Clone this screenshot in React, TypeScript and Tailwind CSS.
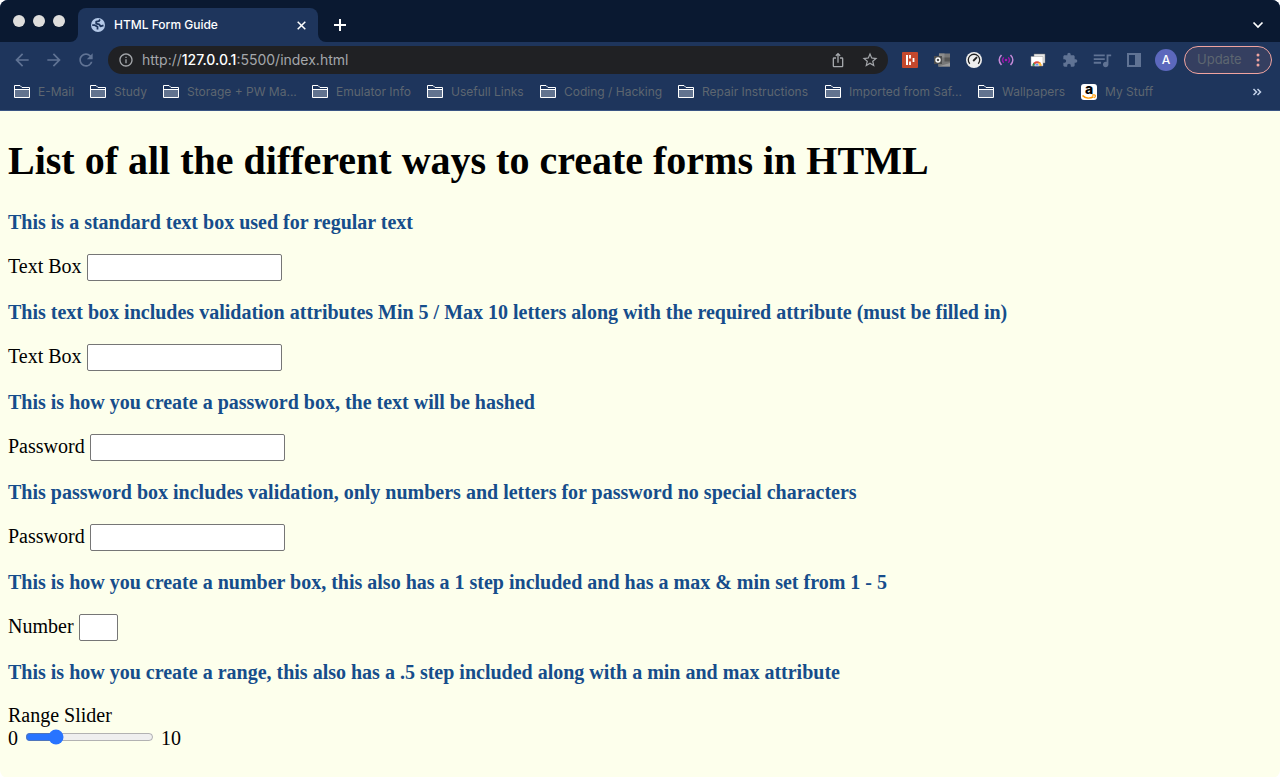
import React from "react";
import {
  MdArrowBack,
  MdArrowForward,
  MdRefresh,
  MdExtension,
  MdQueueMusic,
  MdInfoOutline,
  MdStarBorder,
  MdIosShare,
} from "react-icons/md";

const bookmarks = [
  { name: "E-Mail", width: "w-[76px]" },
  { name: "Study", width: "w-[73px]" },
  { name: "Storage + PW Ma...", width: "w-[149px]" },
  { name: "Emulator Info", width: "w-[115px]" },
  { name: "Usefull Links", width: "w-[113px]" },
  { name: "Coding / Hacking", width: "w-[138px]" },
  { name: "Repair Instructions", width: "w-[147px]" },
  { name: "Imported from Saf...", width: "w-[153px]" },
  { name: "Wallpapers", width: "w-[103px]" },
];

function Folder() {
  return (
    <svg width="16" height="14" viewBox="0 0 16 14" className="shrink-0">
      <path d="M.5 12.500v-12h5.500l2 2h7.500v10z" fill="#1e355c" stroke="#fff" />
      <path d="M1 5h14v7H1z" fill="#62738f" />
      <path d="M1 4.500h14" stroke="#fff" />
    </svg>
  );
}

function Globe() {
  return (
    <svg width="14" height="14" viewBox="0 0 14 14" className="shrink-0">
      <circle cx="7" cy="7" r="7" fill="#b4c9e8" />
      <g fill="none" stroke="#1e355c" strokeWidth="1.800" strokeLinejoin="round">
        <path d="M9 1.500L7.800 3.200 5.200 3.600v2l3 .7 1.300 2 3-.9" />
        <path d="M1.200 7.200h2.600l2.700 1.600v2.700" />
      </g>
    </svg>
  );
}

function Amazon() {
  return (
    <span className="relative flex h-4 w-4 shrink-0 justify-center rounded-[3px] bg-white">
      <span className="text-[14px] leading-[10px] font-extrabold text-black">a</span>
      <svg width="16" height="16" viewBox="0 0 16 16" fill="none" className="absolute inset-0">
        <path d="M1.500 11.500c3 3 7.500 3.200 11 1.200" stroke="#f90" strokeWidth="1.600" />
        <path d="M11 11.200c1.500-.4 2.800-.4 3.200 0s0 1.700-.8 2.700" stroke="#f90" strokeWidth="1.200" />
      </svg>
    </span>
  );
}

function Extensions() {
  return (
    <div className="flex items-center gap-4 pl-[14px]">
      <button aria-label="Recorder">
        <svg width="16" height="16" viewBox="0 0 16 16">
          <rect width="16" height="16" rx="1" fill="#c5482d" />
          <path d="M5 3v10" stroke="#fff" strokeWidth="2" />
          <path d="M8 3v3.500M8 9.500V13M11.500 6v4" stroke="#fff" strokeWidth="1.800" />
        </svg>
      </button>
      <button aria-label="Mail">
        <svg width="16" height="16" viewBox="0 0 16 16">
          <path d="M5 1.500h11v13H4z" fill="#777" />
          <path d="M5 1.500h5.500v4H5z" fill="#8d8d8d" />
          <path d="M10.500 5.500H16v4h-5.500z" fill="#555" />
          <path d="M4 14.500L16 11v3.500z" fill="#999" />
          <path d="M0 4h8v8H0z" fill="#4e4e4e" />
          <circle cx="4" cy="8" r="2" fill="none" stroke="#fff" strokeWidth="1.400" />
        </svg>
      </button>
      <button aria-label="Performance">
        <svg width="16" height="16" viewBox="0 0 16 16">
          <circle cx="8" cy="8" r="8" fill="#eee" />
          <path d="M3.800 11.800a5.700 5.700 0 1 1 8.400 0" fill="none" stroke="#222" strokeWidth="1.300" />
          <path d="M7.200 9L11 5.200" stroke="#222" strokeWidth="1.800" />
        </svg>
      </button>
      <button aria-label="Broadcast">
        <svg width="16" height="16" viewBox="0 0 16 16" fill="none">
          <path d="M3.500 3c-3 3-3 7 0 10M12.500 3c3 3 3 7 0 10" stroke="#c58ad8" strokeWidth="1.600" />
          <path d="M5.800 5.200c-1.600 1.700-1.600 3.900 0 5.600M10.200 5.200c1.600 1.700 1.600 3.900 0 5.600" stroke="#9419a8" strokeWidth="1.500" />
          <circle cx="8" cy="8" r="1.300" fill="#a61bb5" />
        </svg>
      </button>
      <button aria-label="Web store">
        <svg width="16" height="16" viewBox="0 0 16 16">
          <path d="M4 2h11v9H4z" fill="#e8e8e8" stroke="#777" strokeWidth=".5" />
          <path d="M1 4.500h12V14H1z" fill="#fff" stroke="#999" strokeWidth=".5" />
          <path d="M2.500 13.800a4.500 4.500 0 0 1 9 0z" fill="#dd4b3e" />
          <path d="M2.500 13.800a4.500 4.500 0 0 1 1-3l2 3z" fill="#169b55" />
          <path d="M11.500 13.800a4.500 4.500 0 0 0-1-3H8v3z" fill="#fbc02d" />
          <path d="M4.800 13.800a2.200 2.200 0 0 1 4.400 0z" fill="#4285f4" stroke="#fff" strokeWidth=".6" />
        </svg>
      </button>
      <button aria-label="Extensions" className="text-[#607394]"><MdExtension size={16} /></button>
      <button aria-label="Media" className="text-[#607394]"><MdQueueMusic size={22} className="-mx-[3px]" /></button>
      <button aria-label="Side panel">
        <svg width="16" height="16" viewBox="0 0 16 16">
          <path d="M2 2h12v12H2z" fill="none" stroke="#607394" strokeWidth="2" />
          <path d="M9 2h5v12H9z" fill="#607394" />
        </svg>
      </button>
    </div>
  );
}

function Browser() {
  return (
    <header className="rounded-t-lg border-b border-[#3a5583] bg-[#1e355c] font-['Inter',sans-serif]">
      <div className="flex h-[42px] items-end rounded-t-lg bg-[#0a1931]">
        <div className="flex gap-2 self-center pl-[13px]">
          <span className="h-3 w-3 rounded-full bg-[#dedddc]" />
          <span className="h-3 w-3 rounded-full bg-[#dedddc]" />
          <span className="h-3 w-3 rounded-full bg-[#dedddc]" />
        </div>
        <div className="ml-[5px] flex items-end">
          <span className="h-2 w-2 bg-[#1e355c]"><span className="block h-2 w-2 rounded-br-lg bg-[#0a1931]" /></span>
          <div className="flex h-[34px] w-[240px] items-center rounded-t-lg bg-[#1e355c] pr-3 pl-[13px] text-white">
            <Globe />
            <span className="ml-[9px] flex-1 text-[12px] font-medium">HTML Form Guide</span>
            <button aria-label="Close tab">
              <svg width="9" height="9" viewBox="0 0 9 9" stroke="#fff" strokeWidth="1.500"><path d="M.7.7l7.600 7.600M8.300.7L.7 8.300" /></svg>
            </button>
          </div>
          <span className="h-2 w-2 bg-[#1e355c]"><span className="block h-2 w-2 rounded-bl-lg bg-[#0a1931]" /></span>
        </div>
        <button aria-label="New tab" className="mb-[11px] ml-2">
          <svg width="12" height="12" viewBox="0 0 12 12" stroke="#fff" strokeWidth="2"><path d="M0 6h12M6 0v12" /></svg>
        </button>
        <button aria-label="Search tabs" className="mr-4 mb-3 ml-auto">
          <svg width="12" height="10" viewBox="0 0 12 10" fill="none" stroke="#fff" strokeWidth="1.700"><path d="M1.500 2.500L6 7l4.500-4.500" /></svg>
        </button>
      </div>
      <div className="flex h-9 items-center pr-2 pl-3">
        <div className="flex gap-3 text-[#607394]">
          <button aria-label="Back"><MdArrowBack size={20} /></button>
          <button aria-label="Forward"><MdArrowForward size={20} /></button>
          <button aria-label="Reload"><MdRefresh size={20} /></button>
        </div>
        <div className="ml-3 flex h-7 flex-1 items-center rounded-full bg-[#202124] pr-[9px] pl-2.5 text-[#a4a7ab]">
          <MdInfoOutline size={16} />
          <span className="ml-2 flex-1 text-[14px] leading-[18px]">http://<span className="font-medium text-white">127.0.0.1</span>:5500/index.html</span>
          <button aria-label="Share" className="mr-[15px]"><MdIosShare size={16} /></button>
          <button aria-label="Bookmark"><MdStarBorder size={18} /></button>
        </div>
        <Extensions />
        <button className="ml-[13px] h-[22px] w-[22px] rounded-full bg-[#5c68bd] text-[12px] font-medium text-white">A</button>
        <button className="ml-[7px] flex h-7 w-[88px] items-center justify-between rounded-full border border-[#f0a4a0] bg-[#353f60] pr-[11px] pl-3 text-[13px] text-[#5d6670]">
          Update
          <svg width="4" height="14" viewBox="0 0 4 14" fill="#f0a4a0"><circle cx="2" cy="2" r="1.500" /><circle cx="2" cy="7" r="1.500" /><circle cx="2" cy="12" r="1.500" /></svg>
        </button>
      </div>
      <nav className="flex h-8 items-center pb-1 pl-3.5 text-[12px] text-[#5d6670]">
        {bookmarks.map((b) => (
          <a key={b.name} href="#" className={`flex shrink-0 items-center gap-2 whitespace-nowrap ${b.width}`}>
            <Folder />{b.name}
          </a>
        ))}
        <a href="#" className="flex items-center gap-2 whitespace-nowrap"><Amazon />My Stuff</a>
        <button aria-label="More bookmarks" className="mr-[18px] ml-auto">
          <svg width="10" height="10" viewBox="0 0 10 10" fill="none" stroke="#c3d2e8" strokeWidth="1.500"><path d="M1.500 2l3 3-3 3M5.500 2l3 3-3 3" /></svg>
        </button>
      </nav>
    </header>
  );
}

const fields = [
  { id: "text", label: "Text Box", type: "text", width: "w-[195px]", title: "This is a standard text box used for regular text" },
  { id: "text-valid", label: "Text Box", type: "text", width: "w-[195px]", title: "This text box includes validation attributes Min 5 / Max 10 letters along with the required attribute (must be filled in)" },
  { id: "password", label: "Password", type: "password", width: "w-[195px]", title: "This is how you create a password box, the text will be hashed" },
  { id: "password-valid", label: "Password", type: "password", width: "w-[195px]", title: "This password box includes validation, only numbers and letters for password no special characters" },
  { id: "number", label: "Number", type: "number", width: "w-[39px]", title: "This is how you create a number box, this also has a 1 step included and has a max & min set from 1 - 5" },
];

export default function App() {
  return (
    <div className="flex min-h-screen flex-col bg-white">
      <Browser />
      <main className="flex-1 rounded-b-lg bg-[#fdffec] px-2 pt-[26px] font-['Liberation_Serif',serif] text-[20px] leading-[23px] text-black">
        <h1 className="mb-[26px] text-[40px] leading-[48px] font-bold">List of all the different ways to create forms in HTML</h1>
        {fields.map((f) => (
          <section key={f.id} className="mb-5">
            <h2 className="mb-5 font-bold text-[#164d8b]">{f.title}</h2>
            <div className="flex items-start gap-[5px]">
              <label htmlFor={f.id} className="leading-[25px]">{f.label}</label>
              <input id={f.id} type={f.type} className={`h-[27px] rounded-[2px] border border-[#767676] bg-white px-1 [appearance:textfield] ${f.width}`} />
            </div>
          </section>
        ))}
        <section className="pb-7">
          <h2 className="mb-5 font-bold text-[#164d8b]">This is how you create a range, this also has a .5 step included along with a min and max attribute</h2>
          <label htmlFor="range" className="block">Range Slider</label>
          <div className="flex items-start">
            <span>0</span>
            <input id="range" type="range" min="0" max="10" step="0.5" defaultValue="2" className="mx-[7px] h-5 w-[129px] accent-[#2874ff]" />
            <span>10</span>
          </div>
        </section>
      </main>
    </div>
  );
}
